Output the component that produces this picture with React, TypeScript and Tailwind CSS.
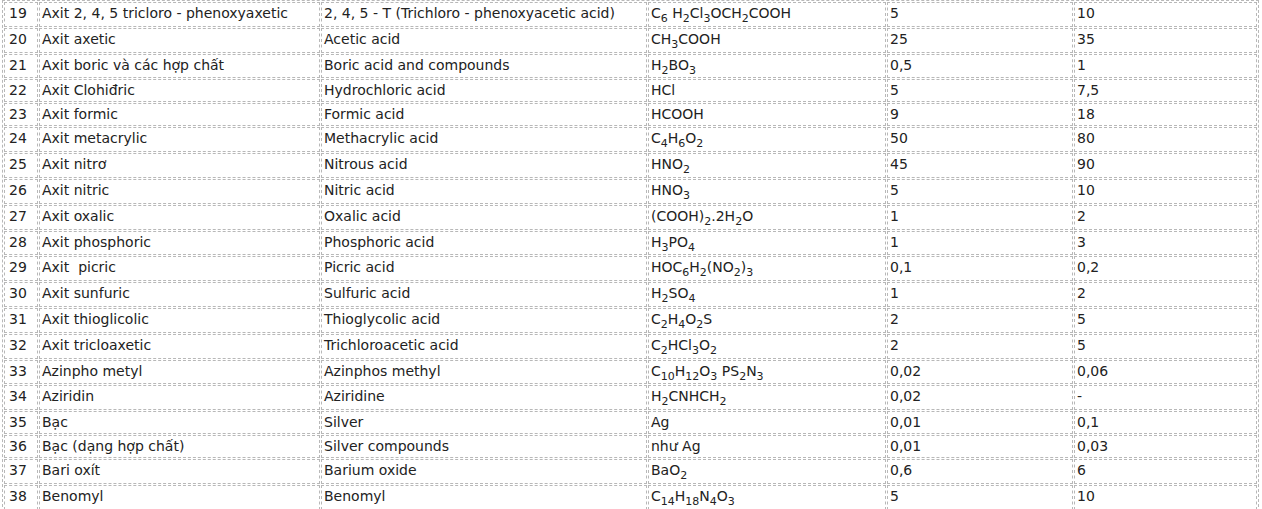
const rows: [string, string, string, string, string, string][] = [
  ['19', 'Axit 2, 4, 5 tricloro - phenoxyaxetic', '2, 4, 5 - T (Trichloro - phenoxyacetic acid)', 'C6 H2Cl3OCH2COOH', '5', '10'],
  ['20', 'Axit axetic', 'Acetic acid', 'CH3COOH', '25', '35'],
  ['21', 'Axit boric và các hợp chất', 'Boric acid and compounds', 'H2BO3', '0,5', '1'],
  ['22', 'Axit Clohiđric', 'Hydrochloric acid', 'HCl', '5', '7,5'],
  ['23', 'Axit formic', 'Formic acid', 'HCOOH', '9', '18'],
  ['24', 'Axit metacrylic', 'Methacrylic acid', 'C4H6O2', '50', '80'],
  ['25', 'Axit nitrơ', 'Nitrous acid', 'HNO2', '45', '90'],
  ['26', 'Axit nitric', 'Nitric acid', 'HNO3', '5', '10'],
  ['27', 'Axit oxalic', 'Oxalic acid', '(COOH)2.2H2O', '1', '2'],
  ['28', 'Axit phosphoric', 'Phosphoric acid', 'H3PO4', '1', '3'],
  ['29', 'Axit\u00a0 picric', 'Picric acid', 'HOC6H2(NO2)3', '0,1', '0,2'],
  ['30', 'Axit sunfuric', 'Sulfuric acid', 'H2SO4', '1', '2'],
  ['31', 'Axit thioglicolic', 'Thioglycolic acid', 'C2H4O2S', '2', '5'],
  ['32', 'Axit tricloaxetic', 'Trichloroacetic acid', 'C2HCl3O2', '2', '5'],
  ['33', 'Azinpho metyl', 'Azinphos methyl', 'C10H12O3 PS2N3', '0,02', '0,06'],
  ['34', 'Aziridin', 'Aziridine', 'H2CNHCH2', '0,02', '-'],
  ['35', 'Bạc', 'Silver', 'Ag', '0,01', '0,1'],
  ['36', 'Bạc (dạng hợp chất)', 'Silver compounds', 'như Ag', '0,01', '0,03'],
  ['37', 'Bari oxít', 'Barium oxide', 'BaO2', '0,6', '6'],
  ['38', 'Benomyl', 'Benomyl', 'C14H18N4O3', '5', '10'],
];

// digits right after a letter or ")" are subscripts
function Formula({ text }: { text: string }) {
  const parts = text.split(/(?<=[A-Za-z)])(\d+)/);
  return (
    <>
      {parts.map((p, i) =>
        i % 2 === 1 ? (
          <sub key={i} className="static align-sub text-[11px] leading-none">
            {p}
          </sub>
        ) : (
          <span key={i}>{p}</span>
        ),
      )}
    </>
  );
}

const cell = 'border border-dashed border-[#b8b8b8] px-[2px] py-[2px] align-top';

export default function App() {
  return (
    <div className="bg-white pl-[2px] font-['DejaVu_Sans',Verdana,sans-serif] text-[14px] leading-[17px] text-[#222]">
      <table className="w-[1257px] table-fixed border-separate border-spacing-[1px] border border-dashed border-[#b8b8b8]">
        <colgroup>
          <col className="w-[34px]" />
          <col className="w-[281px]" />
          <col className="w-[326px]" />
          <col className="w-[238px]" />
          <col className="w-[186px]" />
          <col />
        </colgroup>
        <tbody>
          {rows.map((r) => (
            <tr key={r[0]}>
              <td className={`${cell} pl-[4px]`}>{r[0]}</td>
              <td className={cell}>{r[1]}</td>
              <td className={cell}>{r[2]}</td>
              <td className={cell}>
                <Formula text={r[3]} />
              </td>
              <td className={cell}>{r[4]}</td>
              <td className={cell}>{r[5]}</td>
            </tr>
          ))}
        </tbody>
      </table>
    </div>
  );
}
